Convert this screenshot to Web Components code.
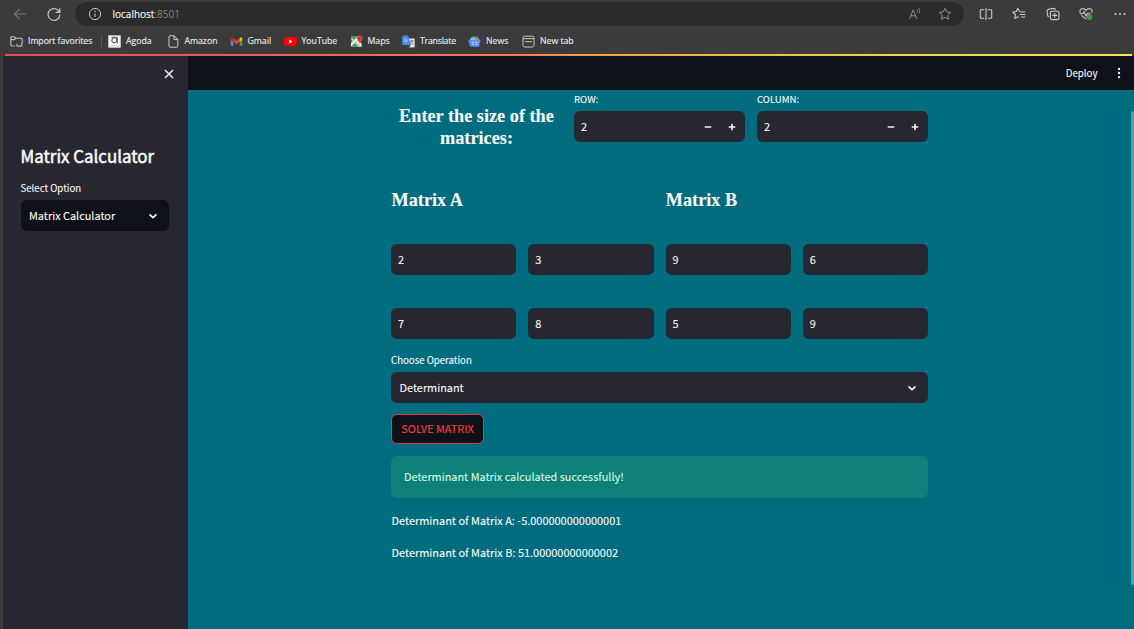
<!DOCTYPE html>
<html lang="en">
<head>
<meta charset="utf-8">
<title>Matrix Calculator</title>
<style>
html,body{margin:0;height:100%;overflow:hidden;background:#3b3b3b}
</style>
</head>
<body>
<app-window></app-window>
<script>
const define = (name, css, html) => customElements.define(name, class extends HTMLElement {
  constructor() {
    super();
    const root = this.attachShadow({ mode: 'open' });
    root.innerHTML = '<style>*{box-sizing:border-box}' + css + '</style>' + html;
  }
});

const ICONS = {
  back: ['0 0 14 14', '<path d="M13 7H1.5M6.5 2 1.5 7l5 5" fill="none" stroke="#747474" stroke-width="1.1"/>'],
  reload: ['0 0 14 14', '<path d="M12.6 5.6A5.9 5.9 0 1 0 12.9 7.6M12.8 1.2V5.4H8.6" fill="none" stroke="#c9c9c9" stroke-width="1.2"/>'],
  info: ['0 0 14 14', '<circle cx="7" cy="7" r="5.6" fill="none" stroke="#c4c4c4" stroke-width="1"/><path d="M7 6.2v3.9" stroke="#c4c4c4" stroke-width="1.1"/><circle cx="7" cy="4.3" r=".75" fill="#c4c4c4"/>'],
  aloud: ['0 0 14 14', '<path d="M1.5 12 5.2 2.8 8.9 12M2.8 8.8h4.9" fill="none" stroke="#8a8a8a" stroke-width="1"/><path d="M8.7 2.3q1 1.3.3 2.9M10.7 1.1q1.9 2.4.5 5.2" fill="none" stroke="#8a8a8a" stroke-width=".9"/>'],
  star: ['0 0 14 14', '<path d="m7 1.3 1.7 3.6 4 .6-2.9 2.8.7 3.9L7 10.3l-3.5 1.9.7-3.9-2.9-2.8 4-.6Z" fill="none" stroke="#8d8d8d" stroke-width="1" stroke-linejoin="round"/>'],
  split: ['0 0 14 14', '<path d="M5.3 2.7H2.2q-.9 0-.9.9v6.8q0 .9.9.9h3.1M8.7 2.7h3.1q.9 0 .9.9v6.8q0 .9-.9.9H8.7M7 1v12" fill="none" stroke="#c9c9c9" stroke-width="1.1"/>'],
  favs: ['0 0 14 14', '<path d="M8.6 4.5 7.3 4.3 5.8 1.3 4.3 4.5l-3.5.5 2.6 2.5-.6 3.9 3-1.7.9.5M8.7 5h4.5M7.7 7.5h5.5M8.9 10h4.3" fill="none" stroke="#c9c9c9" stroke-width="1.1" stroke-linejoin="round"/>'],
  collections: ['0 0 14 14', '<path d="M3.2 9.8q-1.5-.2-1.7-1.7L1.1 4q0-1.5 1.5-1.8l5-.8q1.5-.1 1.8 1.4" fill="none" stroke="#c9c9c9" stroke-width="1.1"/><rect x="4.4" y="4.2" width="8.5" height="8.4" rx="1.5" fill="none" stroke="#c9c9c9" stroke-width="1.1"/><path d="M8.7 6v4.8M6.3 8.4h4.8" stroke="#c9c9c9" stroke-width="1.1"/>'],
  health: ['0 0 14 14', '<path d="M1.1 6.2Q.3 1.7 3.7 1.5 5.8 1.5 7 3.5q1.2-2 3.3-2 3.4.2 2.6 4.2M2.4 8.4 7 12.2M1 6.8h2.8L5 4.7l2.1 4.2 1.3-2.7h3.2" fill="none" stroke="#c9c9c9" stroke-width="1.1"/><circle cx="10.4" cy="9.9" r="3" fill="#3f9b45"/>'],
  more: ['0 0 14 14', '<g fill="#c9c9c9"><circle cx="2.5" cy="7" r="1"/><circle cx="7" cy="7" r="1"/><circle cx="11.5" cy="7" r="1"/></g>'],
  folder: ['0 0 13 13', '<path d="M4.5 11H2Q.8 11 .8 9.8V2.8q0-1.1 1.2-1.1h2.2l1.5 1.5H11q1.2 0 1.2 1.2v4.6M.8 4.6h3.6l1.2-1.2" fill="none" stroke="#c4c4c4" stroke-width="1.1"/><path d="M7 8.7v2.4h4.4V8.7M5.9 10.2 7 11.3M12.5 10.2l-1.1 1.1" fill="none" stroke="#c4c4c4" stroke-width="1"/>'],
  agoda: ['0 0 13 13', '<rect x=".3" y=".3" width="12.4" height="12.4" fill="#f2f2f2"/><circle cx="6.3" cy="5.3" r="2.5" fill="none" stroke="#444" stroke-width="1"/><path d="M3.4 2.3h6v6.4" fill="none" stroke="#555" stroke-width=".9"/><path d="M2.5 11h8" stroke="#b9b9b9" stroke-dasharray="1 1"/>'],
  file: ['0 0 13 13', '<path d="M2 1.8q0-1 1-1h4.3L10.8 4.4v6.8q0 1-1 1H3q-1 0-1-1ZM7 .9v3.7h3.7" fill="none" stroke="#d0d0d0" stroke-width="1"/>'],
  gmail: ['0 0 13 13', '<path d="M.7 3.7v7h2.6V5.5Z" fill="#4b8bf5"/><path d="M12.3 3.7v7H9.7V5.5Z" fill="#36a852"/><path d="M3.3 3.2v3.6l3.2 2.4 3.2-2.4V3.2L6.5 5.7Z" fill="#ea4335"/><path d="M.7 3.7q0-2.2 1.8-1.2l.8.7v3.6L.7 4.8Z" fill="#c5221f"/><path d="M12.3 3.7q0-2.2-1.8-1.2l-.8.7v3.6l2.6-2Z" fill="#fbbc04"/>'],
  youtube: ['0 0 13 13', '<rect x=".1" y="2" width="12.8" height="9" rx="2.5" fill="#f00"/><path d="M5.2 4.6v3.8l3.4-1.9Z" fill="#fff"/>'],
  maps: ['0 0 13 13', '<path d="M1 1h7L1 8Z" fill="#2da94f"/><path d="M1 8 8 1l2 2-9 9Z" fill="#eee"/><path d="M1.2 12 6 7l5.3 5Z" fill="#32a853"/><path d="m6 7 2-2 3.6 3.5V12Z" fill="#eee"/><path d="M1 4.5 2.5 3l9 9H9Z" fill="#ddd" opacity=".8"/><path d="M12.6 3.3q0 1.8-2.8 5.2Q7 5.1 7 3.3a2.8 2.8 0 0 1 5.6 0" fill="#e84235"/><circle cx="9.8" cy="3.2" r="1" fill="#922"/>'],
  translate: ['0 0 13 13', '<path d="M5 3.5h7q.7 0 .7.7v7.6q0 .7-.7.7H7.3Z" fill="#e2e2e2"/><path d="M1 .5h5L9 10H1Q.3 10 .3 9.3V1.2Q.3.5 1 .5" fill="#4b86ed"/><path d="M5.9 5.2H4v1h.8q-.3.9-1.2.9a1.7 1.7 0 1 1 1.1-3" fill="none" stroke="#cfe0ff" stroke-width=".7"/><path d="M8 6h4M10 5v1q-.3 2-1.6 2.7M8.8 7q1 1.8 2.6 2.4" fill="none" stroke="#667" stroke-width=".8"/><path d="m6.5 10 2.5 0-1.7 2.4Z" fill="#2456b8"/>'],
  news: ['0 0 13 13', '<path d="M3.2 1.5h6.6V5H3.2Z" fill="#37a853"/><path d="m1.8 3.4 5-1.2 1 3-5 1Z" fill="#8ab8f8"/><path d="m8 3.2 3.2-.4v3H8Z" fill="#c9857d"/><path d="M.3 5h12.4L11 11.8H2Z" fill="#568bf0"/><path d="M3.6 7.2h2.3M4 9.2h1.9M7.3 7.2h2.3M7.3 9.2h1.9" stroke="#e5eeff" stroke-width=".9"/>'],
  tab: ['0 0 13 13', '<rect x="1" y="1.2" width="11" height="10.8" rx="1.5" fill="none" stroke="#c4c4c4" stroke-width="1"/><path d="M1 3.7h11M3.2 6.7h6.6" stroke="#c4c4c4" stroke-width="1" fill="none"/>'],
  close: ['0 0 12 12', '<path d="m2 2 8 8M10 2l-8 8" stroke="#f0f0f4" stroke-width="1.5"/>'],
  chevron: ['0 0 12 12', '<path d="m2.5 4.4 3.5 3.3 3.5-3.3" fill="none" stroke="#f3f3f5" stroke-width="1.7"/>'],
  minus: ['0 0 12 12', '<path d="M2.7 6h6.6" stroke="#f3f3f5" stroke-width="1.5"/>'],
  plus: ['0 0 12 12', '<path d="M2.7 6h6.6M6 2.8v6.5" stroke="#f3f3f5" stroke-width="1.6"/>'],
  kebab: ['0 0 12 12', '<g fill="#f0f0f0"><circle cx="6" cy="1.9" r="1.2"/><circle cx="6" cy="6" r="1.2"/><circle cx="6" cy="10.1" r="1.2"/></g>']
};
customElements.define('ui-icon', class extends HTMLElement {
  connectedCallback() {
    if (this.shadowRoot) return;
    const [box, body] = ICONS[this.getAttribute('name')];
    this.attachShadow({ mode: 'open' }).innerHTML =
      `<style>:host{display:block;flex:none;width:14px;height:14px}svg{display:block;width:100%;height:100%}</style><svg viewBox="${box}">${body}</svg>`;
  }
});

define('browser-toolbar', `
:host{display:flex;align-items:center;height:28px;padding-left:13px;font:10px/14px "Open Sans",sans-serif;color:#858585}
.address{display:flex;align-items:center;width:889px;height:24px;margin-left:14px;padding:0 12px 0 13px;border-radius:12px;background:#2b2b2b}
.url{margin-left:10.5px;flex:1;letter-spacing:0}
b{font-weight:400;color:#f1f1f1;-webkit-text-stroke:.15px #f1f1f1}
.end{display:flex;gap:16px}
.tools{display:flex;gap:19.6px;margin-left:14.5px}
.reload{margin-left:20px}`, `
<ui-icon name="back"></ui-icon><ui-icon name="reload" class="reload"></ui-icon>
<div class="address"><ui-icon name="info"></ui-icon><div class="url"><b>localhost</b>:8501</div>
<div class="end"><ui-icon name="aloud"></ui-icon><ui-icon name="star"></ui-icon></div></div>
<div class="tools"><ui-icon name="split"></ui-icon><ui-icon name="favs"></ui-icon><ui-icon name="collections"></ui-icon><ui-icon name="health"></ui-icon><ui-icon name="more"></ui-icon></div>`);

customElements.define('bookmark-item', class extends HTMLElement {
  connectedCallback() {
    if (this.shadowRoot) return;
    this.attachShadow({ mode: 'open' }).innerHTML = `<style>
:host{display:flex;align-items:center;gap:5px;font:8.7px/13px "Open Sans",sans-serif;color:#ebebeb;white-space:nowrap;-webkit-text-stroke:.12px #ebebeb}
ui-icon{width:13px;height:13px}</style><ui-icon name="${this.getAttribute('icon')}"></ui-icon><slot></slot>`;
  }
});
define('bookmark-bar', `
:host{display:grid;grid-template-columns:98px 58.5px 63px 54px 66px 52.5px 66px 54px 70px;align-items:center;height:26px;padding-left:10px;box-sizing:border-box}
.first{border-right:1px solid #575757;margin-right:6px;letter-spacing:-.05px}
.tight{letter-spacing:-.2px}`, `
<bookmark-item icon="folder" class="first">Import favorites</bookmark-item>
<bookmark-item icon="agoda">Agoda</bookmark-item><bookmark-item icon="file">Amazon</bookmark-item>
<bookmark-item icon="gmail">Gmail</bookmark-item><bookmark-item icon="youtube">YouTube</bookmark-item>
<bookmark-item icon="maps">Maps</bookmark-item><bookmark-item icon="translate" class="tight">Translate</bookmark-item>
<bookmark-item icon="news">News</bookmark-item><bookmark-item icon="tab">New tab</bookmark-item>`);

define('st-select', `
:host{display:block;color:#fafafa}
.label{font-size:9.65px;line-height:14px;height:19px}
.box{display:flex;align-items:center;justify-content:space-between;height:31px;padding:0 10px 0 8.5px;border-radius:6px;background:var(--field,#262730);font-size:10.9px;line-height:16px}
.box span{padding-bottom:2px}
ui-icon{width:12px;height:12px}`, `
<div class="label"><slot name="label"></slot></div><div class="box"><span><slot></slot></span><ui-icon name="chevron"></ui-icon></div>`);

define('st-field', `
:host{display:flex;align-items:center;height:31px;padding:0 7px 2px;border-radius:6px;background:#262730;color:#fafafa;font-size:10.9px;line-height:16px;box-sizing:border-box}`, `<slot></slot>`);

define('st-stepper', `
:host{display:block;color:#fafafa}
.label{font-size:9.6px;line-height:14px;height:19px}
.box{display:flex;align-items:center;height:31px;padding:0 7px;border-radius:6px;background:#262730;font-size:10.9px;line-height:16px}
.box span{flex:1;padding-bottom:2px}
ui-icon{width:12px;height:12px}
ui-icon+ui-icon{margin-left:12.5px}`, `
<div class="label"><slot name="label"></slot></div><div class="box"><span><slot></slot></span><ui-icon name="minus"></ui-icon><ui-icon name="plus"></ui-icon></div>`);

define('st-alert', `
:host{display:flex;align-items:center;height:42px;padding:0 13px 2px;border-radius:6px;background:#0d8079;color:#d5fbe2;font-size:10.9px;line-height:16px;box-sizing:border-box}`, `<slot></slot>`);

define('st-button', `
:host{display:inline-flex}
button{width:93px;height:30px;padding:0 0 2px;border:1px solid #d93f4c;border-radius:6px;background:#0e1117;color:#ff3b40;font:inherit;font-size:10.9px;line-height:16px;white-space:nowrap;-webkit-text-stroke:inherit}`, `<button><slot></slot></button>`);

define('app-sidebar', `
:host{display:block;background:#262730;color:#fafafa;padding:10px 19px 0 17.5px;box-sizing:border-box;--field:#0e1117}
.top{display:flex;justify-content:flex-end;height:78px;margin-right:-6px}
ui-icon{width:12px;height:12px;margin:2px 0 0}
h1{margin:0 0 14px;font-size:16.9px;line-height:23px;font-weight:400;-webkit-text-stroke:.5px #fafafa;white-space:nowrap}`, `
<div class="top"><ui-icon name="close"></ui-icon></div>
<h1>Matrix Calculator</h1>
<st-select><span slot="label">Select Option</span>Matrix Calculator</st-select>`);

define('app-header', `
:host{display:flex;align-items:center;justify-content:flex-end;height:34px;background:#0e1117;color:#fafafa;font-size:9.7px;line-height:16px;padding-right:9.5px;box-sizing:border-box}
span{padding-bottom:1px}
ui-icon{width:12px;height:12px;margin-left:15px}`, `<span>Deploy</span><ui-icon name="kebab"></ui-icon>`);

define('matrix-form', `
:host{display:block;width:537px;margin:2px 0 0 203px;color:#fafafa}
.size{display:grid;grid-template-columns:171px 171px 171px;gap:12px;height:95px}
h2{margin:0;font:bold 18.25px/22px "Liberation Serif",serif;color:#fafafa}
.size h2{text-align:center;padding-top:13px}
.titles{display:grid;grid-template-columns:1fr 1fr;column-gap:12px;height:57px;padding:2px 0 0 .5px}
.cells{display:grid;grid-template-columns:repeat(4,1fr);column-gap:12px;row-gap:33px;margin-bottom:14px}
st-button{display:flex;margin:11px 0 12px}
p{margin:0;font-size:10.95px;line-height:16px}
.results{display:grid;gap:16px;margin-top:14px;padding-left:.5px}`, `
<div class="size"><h2>Enter the size of the matrices:</h2>
<st-stepper><span slot="label">ROW:</span>2</st-stepper><st-stepper><span slot="label">COLUMN:</span>2</st-stepper></div>
<div class="titles"><h2>Matrix A</h2><h2>Matrix B</h2></div>
<div class="cells"><st-field>2</st-field><st-field>3</st-field><st-field>9</st-field><st-field>6</st-field>
<st-field>7</st-field><st-field>8</st-field><st-field>5</st-field><st-field>9</st-field></div>
<st-select><span slot="label">Choose Operation</span>Determinant</st-select>
<st-button>SOLVE MATRIX</st-button>
<st-alert>Determinant Matrix calculated successfully!</st-alert>
<div class="results"><p>Determinant of Matrix A: -5.000000000000001</p><p>Determinant of Matrix B: 51.00000000000002</p></div>`);

define('app-window', `
:host{display:flex;flex-direction:column;height:629px;width:1134px;background:#3b3b3b;font-family:"Noto Sans CJK JP","Noto Sans CJK SC",sans-serif}
.page{display:grid;grid-template-columns:185px 1fr;flex:1;padding-left:3px;min-height:0;-webkit-text-stroke:.1px}
.line{height:2px;margin:0 2px 0 5px;background:linear-gradient(90deg,#e6494f,#f07a5c 45%,#f5a04b 52%,#e8d84e 80%,#efe850)}
.main{position:relative;background:#006c80}
.thumb{position:absolute;right:0;top:55px;width:3px;height:474px;border-radius:2px;background:#5b9aa5}`, `
<browser-toolbar></browser-toolbar><bookmark-bar></bookmark-bar>
<div class="line"></div>
<div class="page"><app-sidebar></app-sidebar><div class="main"><app-header></app-header><matrix-form></matrix-form><div class="thumb"></div></div></div>`);
</script>
</body>
</html>
